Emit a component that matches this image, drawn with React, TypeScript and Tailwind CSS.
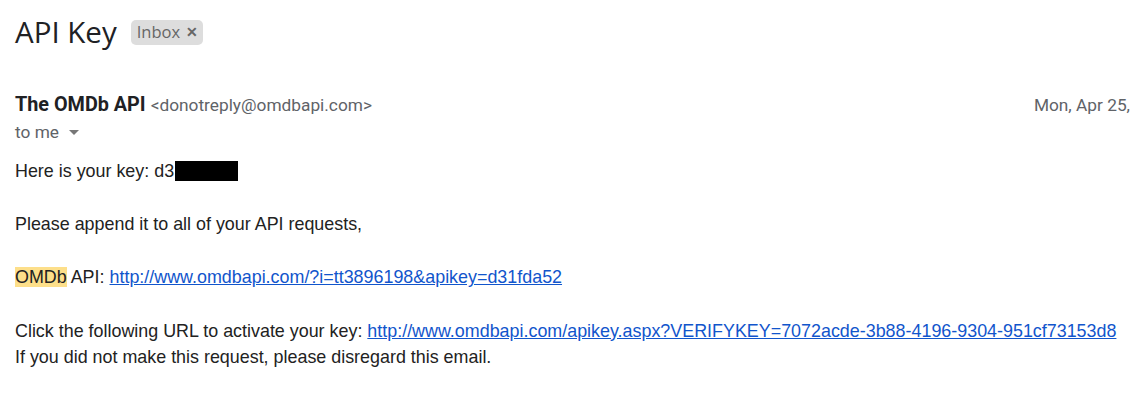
const linkClass = 'text-[#1155cc] underline';

export default function App() {
  return (
    <div className="w-[1134px] h-[414px] overflow-hidden bg-white">
      <div className="flex items-center gap-[14px] pl-[15px] pt-[13px]">
        <h1 className="font-['Open_Sans',sans-serif] text-[29.5px] leading-[38px] text-[#202124]">API Key</h1>
        <span className="flex items-center gap-[6px] rounded-[5px] bg-[#dddddd] pl-[6px] pr-[5px] h-[25px] font-['Open_Sans',sans-serif] text-[16.5px] text-[#666666]">
          Inbox
          <span className="text-[14px] leading-none font-bold">✕</span>
        </span>
      </div>

      <div className="mt-[42px] flex items-start justify-between pl-[15px] pr-[4px] font-['Roboto',sans-serif]">
        <div>
          <div className="flex items-baseline gap-[5px] leading-[24px]">
            <span className="text-[19.8px] font-bold text-[#202124]">The OMDb API</span>
            <span className="text-[17.3px] text-[#5f6368]">&lt;donotreply@omdbapi.com&gt;</span>
          </div>
          <div className="flex items-center gap-[6px] mt-[3px] text-[17.3px] leading-[24px] text-[#5f6368]">
            to me
            <svg width="14" height="14" viewBox="0 0 14 14" className="ml-[2px]">
              <path d="M2 5h10l-5 5z" fill="#777" />
            </svg>
          </div>
        </div>
        <div className="whitespace-nowrap text-[17.3px] leading-[24px] text-[#5f6368]">Mon, Apr 25,</div>
      </div>

      <div className="mt-[14px] pl-[15px] font-['Liberation_Sans',Arial,sans-serif] text-[17.9px] leading-[26.6px] text-[#222222]">
        <div className="flex items-center">
          Here is your key: d3
          <span className="inline-block w-[63px] h-[20px] bg-black ml-[1px]" />
        </div>
        <br />
        <div>Please append it to all of your API requests,</div>
        <br />
        <div>
          <span className="bg-[#fddf8a]">OMDb</span> API:{' '}
          <a className={linkClass} href="#">http://www.omdbapi.com/?i=tt3896198&amp;apikey=d31fda52</a>
        </div>
        <br />
        <div className="whitespace-nowrap">
          Click the following URL to activate your key:{' '}
          <a className={linkClass} href="#">http://www.omdbapi.com/apikey.aspx?VERIFYKEY=7072acde-3b88-4196-9304-951cf73153d8</a>
        </div>
        <div>If you did not make this request, please disregard this email.</div>
      </div>
    </div>
  );
}
